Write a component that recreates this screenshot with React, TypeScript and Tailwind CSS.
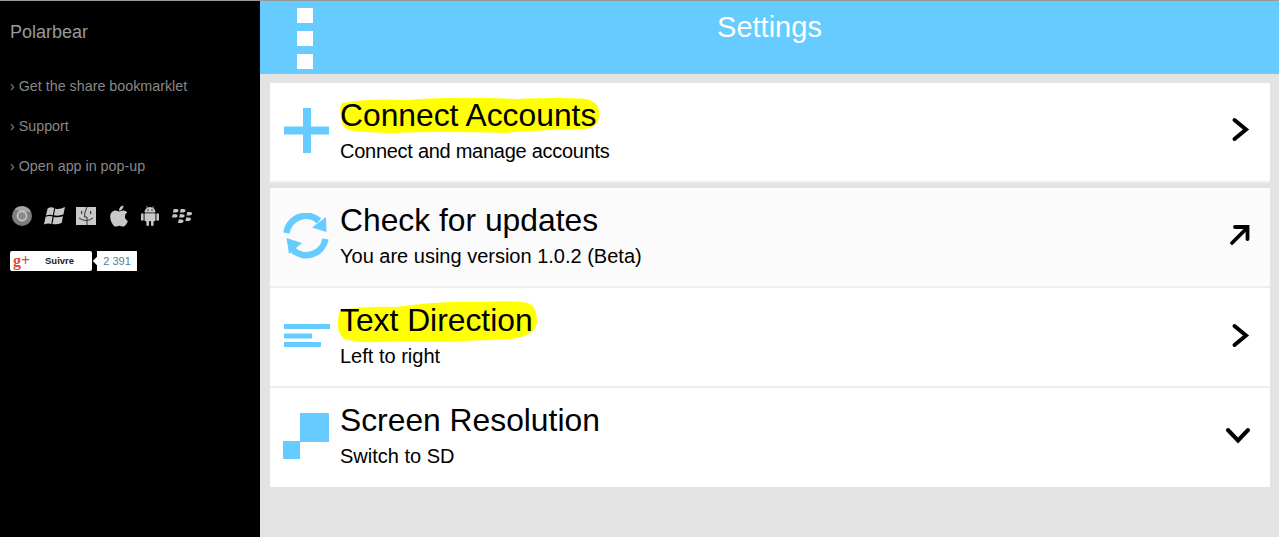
import React from "react";
import { FaApple, FaBlackberry } from "react-icons/fa";

const BLUE = "#66cbff";

const Chevron = () => (
  <svg width="22" height="26" viewBox="0 0 22 26" fill="none" stroke="#000" strokeWidth="4" strokeLinecap="round" strokeLinejoin="miter">
    <path d="M5.5 3 L17 12.5 L5.5 22" />
  </svg>
);
const ArrowNE = () => (
  <svg width="22" height="22" viewBox="0 0 22 22" fill="none" stroke="#000" strokeWidth="3.8" strokeLinecap="round" strokeLinejoin="miter">
    <path d="M3 19 L18 4" />
    <path d="M6 3 H18.5 V15" />
  </svg>
);
const ChevronDown = () => (
  <svg width="26" height="18" viewBox="0 0 26 18" fill="none" stroke="#000" strokeWidth="4" strokeLinecap="round">
    <path d="M3 3 L13 13.5 L23 3" />
  </svg>
);

const PlusIcon = () => (
  <svg width="47" height="46" viewBox="0 0 47 46" fill={BLUE}>
    <rect x="20" y="0" width="8" height="45" />
    <rect x="1" y="18.5" width="45" height="8" />
  </svg>
);
const SyncIcon = () => (
  <svg width="47" height="46" viewBox="0 0 47 46" fill="none">
    <path d="M3.5 20 A19.5 19.5 0 0 1 36 8" stroke={BLUE} strokeWidth="6.5" />
    <path d="M43 4 L43.5 19 L29 14.5 Z" fill={BLUE} />
    <path d="M42.5 26 A19.5 19.5 0 0 1 10 37" stroke={BLUE} strokeWidth="6.5" />
    <path d="M3.5 25 L19 30 L6 41 Z" fill={BLUE} />
  </svg>
);
const AlignIcon = () => (
  <svg width="47" height="46" viewBox="0 0 47 46" fill={BLUE}>
    <rect x="1" y="12" width="46" height="5" />
    <rect x="1" y="21.5" width="28" height="5" />
    <rect x="1" y="30" width="37" height="5" />
  </svg>
);
const ResIcon = () => (
  <svg width="47" height="46" viewBox="0 0 47 46" fill={BLUE}>
    <rect x="17" y="0" width="29" height="29" />
    <rect x="0" y="28" width="17" height="18" />
  </svg>
);

const Blob = ({ w, h, d }: { w: number; h: number; d: string }) => (
  <svg className="absolute left-[-4px] top-[-2px]" width={w} height={h} viewBox={`0 0 ${w} ${h}`} overflow="visible">
    <path d={d} fill="#ffff00" />
  </svg>
);

const Row = ({
  icon, title, sub, arrow, bg = "bg-white", blob, border = true, h = "h-[100px]", subClass = "", iconClass = "", arrowClass = "",
}: {
  icon: React.ReactNode; title: string; sub: string; arrow: React.ReactNode; bg?: string; blob?: React.ReactNode; border?: boolean; h?: string; subClass?: string; iconClass?: string; arrowClass?: string;
}) => (
  <div className={`flex items-center pl-[13px] pr-[15px] ${h} ${bg} ${border ? "border-b-2 border-[#eeeeee]" : ""}`}>
    <div className={`w-[47px] shrink-0 ${iconClass}`}>{icon}</div>
    <div className="ml-[10px] flex flex-col">
      <div className="relative isolate mb-[5px] w-fit text-[31.8px] leading-[32px] text-black">
        {blob}
        <span className="relative">{title}</span>
      </div>
      <div className={`text-[20px] leading-[30px] text-black ${subClass}`}>{sub}</div>
    </div>
    <div className={`ml-auto flex w-[30px] items-center justify-center ${arrowClass}`}>{arrow}</div>
  </div>
);

const ChromeIcon = () => (
  <svg width="20" height="20" viewBox="0 0 20 20">
    <circle cx="10" cy="10" r="10" fill="#7d7d7d" />
    <path d="M2.5 3.5 A10 10 0 0 1 19 5.8 H10 Z" fill="#a6a6a6" />
    <circle cx="10" cy="10" r="5.4" fill="#c9c9c9" />
    <circle cx="10" cy="10" r="3.8" fill="#8a8a8a" />
  </svg>
);
const WinIcon = () => (
  <svg width="21" height="20" viewBox="0 0 21 20" fill="#c8c8c8">
    <path d="M3.6 2.4 Q7 0.5 10.2 2 L8.8 9.2 Q6 8 1.9 9.5 Z" />
    <path d="M11.2 2.4 Q14.5 4 21 1 L19.4 8.6 Q14 10.5 9.9 9.3 Z" />
    <path d="M1.6 10.8 Q5.5 9.4 8.6 10.6 L7.3 18 Q4 16.6 0 18.4 Z" />
    <path d="M9.8 11 Q14 12 19 10.2 L17.6 17 Q12.5 19 8.4 18 Z" />
  </svg>
);
const FinderIcon = () => (
  <svg width="20" height="18" viewBox="0 0 20 18">
    <rect width="20" height="18" fill="#c8c8c8" />
    <path d="M11 0 Q8 6 8.5 10 H11 V18" stroke="#333" strokeWidth="1" fill="none" />
    <rect x="5" y="4" width="1.2" height="3" fill="#333" />
    <rect x="14" y="4" width="1.2" height="3" fill="#333" />
    <path d="M3 11 Q10 16 17 11" stroke="#333" strokeWidth="1" fill="none" />
  </svg>
);
const AndroidIcon = () => (
  <svg width="18" height="20" viewBox="0 0 18 20" fill="#c8c8c8">
    <path d="M3.5 6.5 A5.5 5.5 0 0 1 14.5 6.5 Z" />
    <rect x="3.5" y="7.3" width="11" height="8" rx="1" />
    <rect x="0" y="7.3" width="2.6" height="7.5" rx="1.3" />
    <rect x="15.4" y="7.3" width="2.6" height="7.5" rx="1.3" />
    <rect x="5.4" y="14" width="2.6" height="6" rx="1.3" />
    <rect x="10" y="14" width="2.6" height="6" rx="1.3" />
    <path d="M5.3 0.2 L7 2.5 M12.7 0.2 L11 2.5" stroke="#c8c8c8" strokeWidth="0.8" />
    <circle cx="7" cy="4" r="0.7" fill="#000" />
    <circle cx="11" cy="4" r="0.7" fill="#000" />
  </svg>
);

export default function App() {
  return (
    <div className="flex h-[537px] w-[1279px] overflow-hidden bg-[#e3e3e3] font-['Liberation_Sans',Arial,sans-serif]">
      <aside className="flex h-full w-[260px] shrink-0 flex-col border-t border-[#999999] bg-black pl-[10px]">
        <div className="mt-[21px] text-[18px] leading-[21px] text-[#999999]">Polarbear</div>
        <ul className="mt-[33px] flex flex-col gap-[20px] text-[14.3px] leading-[20px] text-[#888888]">
          <li>› Get the share bookmarklet</li>
          <li>› Support</li>
          <li>› Open app in pop-up</li>
        </ul>
        <div className="ml-[2px] mt-[30px] flex h-[20px] items-center gap-[12px] text-[#c8c8c8]">
          <ChromeIcon />
          <WinIcon />
          <span className="-ml-[1px]"><FinderIcon /></span>
          <span className="ml-[1px] flex w-[20px] justify-center"><FaApple size={24} /></span>
          <AndroidIcon />
          <span className="ml-[1px]"><FaBlackberry size={20} /></span>
        </div>
        <div className="mt-[25px] flex items-center">
          <div className="flex h-[20px] w-[82px] items-center rounded-[2px] bg-white pl-[3px]">
            <span className="w-[14px] font-['Liberation_Serif',serif] text-[16px] font-bold leading-none text-[#dd4b39]">g+</span>
            <span className="ml-[18px] text-[9.5px] font-bold text-[#222222]">Suivre</span>
          </div>
          <div className="relative ml-[5px] flex h-[20px] w-[40px] items-center justify-center bg-white text-[11px] text-[#5a7a9a]">
            <span className="absolute left-[-3px] top-[7px] h-[6px] w-[6px] rotate-45 bg-white" />
            2 391
          </div>
        </div>
      </aside>
      <main className="flex min-w-0 flex-1 flex-col">
        <header className="grid h-[74px] shrink-0 grid-cols-[1fr_auto_1fr] border-t border-[#999999] bg-[#66cbff]">
          <div className="flex flex-col gap-[8px] pl-[37px] pt-[7px]">
            <span className="h-[15px] w-[16px] bg-white" />
            <span className="h-[15px] w-[16px] bg-white" />
            <span className="h-[15px] w-[16px] bg-white" />
          </div>
          <div className="pt-[9px] text-[29px] leading-[34px] text-white">Settings</div>
          <div />
        </header>
        <div className="ml-[10px] mt-[9px] w-[1000px] bg-white">
          <Row
            icon={<PlusIcon />}
            iconClass="-mt-[2px]"
            title="Connect Accounts"
            sub="Connect and manage accounts"
            subClass="tracking-[-0.27px]"
            arrow={<Chevron />}
            arrowClass="-mt-[4px]"
            blob={<Blob w={266} h={40} d="M6 6 Q30 1 70 3 Q120 -1 180 2 Q230 0 250 2 Q264 5 263 18 Q263 31 248 32 Q200 33 170 36 Q100 34 60 36 Q30 36 12 33 Q5 29 5 20 Q3 10 6 6 Z" />}
          />
        </div>
        <div className="ml-[10px] mt-[5px] w-[1000px] bg-white">
          <Row icon={<SyncIcon />} iconClass="-mt-[2px]" title="Check for updates" sub="You are using version 1.0.2 (Beta)" arrow={<ArrowNE />} arrowClass="-mt-[4px]" bg="bg-[#fbfbfb]" />
          <Row
            icon={<AlignIcon />}
            iconClass="-mt-[5px]"
            title="Text Direction"
            sub="Left to right"
            arrow={<Chevron />}
            arrowClass="-mt-[2px]"
            blob={<Blob w={205} h={45} d="M4 9 Q20 4 60 5 Q100 -1 150 0 Q185 -2 194 2 Q201 6 201 20 Q200 34 175 37 Q100 41 60 39 Q25 42 8 37 Q1 30 2 20 Q2 12 4 9 Z" />}
          />
          <Row icon={<ResIcon />} iconClass="-mt-[4px]" title="Screen Resolution" sub="Switch to SD" arrow={<span className="-ml-[5px]"><ChevronDown /></span>} border={false} h="h-[99px]" arrowClass="-mt-[4px]" />
        </div>
      </main>
    </div>
  );
}
